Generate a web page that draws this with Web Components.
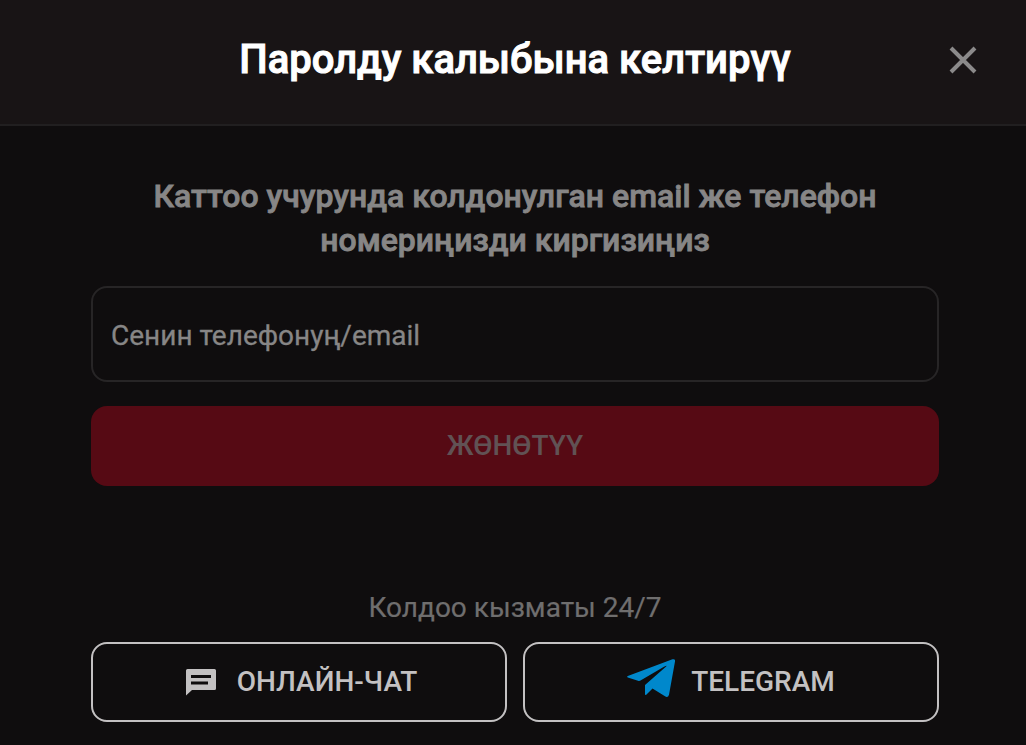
<!DOCTYPE html>
<html lang="ky"><head><meta charset="utf-8"><title>Паролду калыбына келтирүү</title>
<style>html,body{margin:0;height:100%;background:#0f0d0e}body{font-family:Roboto,sans-serif;overflow:hidden}</style></head>
<body>
<recovery-dialog></recovery-dialog>
<script>
const define=(name,html)=>customElements.define(name,class extends HTMLElement{constructor(){super();this.attachShadow({mode:'open'}).innerHTML=html;}});
define('dialog-header',`<style>:host{display:grid;grid-template-columns:1fr auto 1fr;align-items:center;box-sizing:border-box;height:126px;padding:0 48px 4px 52px;background:#181415;border-bottom:2px solid #211f20}
h1{grid-column:2;margin:0;color:#fff;font-size:40px;line-height:48px;font-weight:500;-webkit-text-stroke:1px #fff;white-space:nowrap}button{justify-self:end;display:block;border:0;padding:0;background:none;width:30px;height:30px}svg{display:block}</style>
<h1><slot></slot></h1><button aria-label="Жабуу"><svg width="30" height="30" viewBox="0 0 30 30"><path d="M3 3L27 27M27 3L3 27" stroke="#8b8a8a" stroke-width="4"/></svg></button>`);
define('login-field',`<style>:host{display:flex;align-items:center;box-sizing:border-box;height:96px;border:2px solid #272526;border-radius:16px;padding:2px 18px 0;color:#878686;font-size:28px;white-space:nowrap;-webkit-text-stroke:.3px #878686}</style><span><slot></slot></span>`);
define('submit-button',`<style>:host{display:block}button{display:block;width:100%;height:80px;border:0;border-radius:16px;background:#560a14;color:#615254;font:500 28px/80px Roboto,sans-serif;padding:0}</style><button disabled><slot></slot></button>`);
define('support-link',`<style>:host{display:flex;flex:1;align-items:center;justify-content:center;box-sizing:border-box;height:80px;border:2px solid #c3c1c2;border-radius:16px;color:#c3c1c2;font-size:28px;font-weight:500;line-height:34px;white-space:nowrap}::slotted(svg){display:block;flex:none}</style><slot name="icon"></slot><span><slot></slot></span>`);
define('recovery-dialog',`<style>:host{display:block}main{padding:48px 87px 0 91px}h2{margin:0;color:#878686;font-size:32px;line-height:44px;font-weight:500;-webkit-text-stroke:.8px #878686;text-align:center;white-space:nowrap}login-field{margin-top:24px}submit-button{margin-top:24px}p{margin:100px 0 0;text-align:center;font-size:28px;line-height:44px;color:#6f6e6e;-webkit-text-stroke:.2px #6f6e6e}nav{display:flex;gap:16px;margin-top:12px}</style>
<dialog-header>Паролду калыбына келтирүү</dialog-header>
<main><h2>Каттоо учурунда колдонулган email же телефон<br>номериңизди киргизиңиз</h2>
<login-field>Сенин телефонуң/email</login-field><submit-button>ЖӨНӨТҮҮ</submit-button>
<p>Колдоо кызматы 24/7</p><nav>
<support-link><svg slot="icon" width="30" height="28" viewBox="0 0 30 28" style="margin:0 21px 1px 5px"><path fill="#c3c1c2" fill-rule="evenodd" d="M1.5 1H28.5Q30 1 30 2.5V20.5Q30 22 28.5 22H6L0 27.5V2.5Q0 1 1.5 1ZM5 7V10H25V7ZM5 13.5V16.5H22V13.5Z"/></svg>ОНЛАЙН-ЧАТ</support-link>
<support-link><svg slot="icon" width="48" height="38" viewBox="0 0 48 38" style="margin:0 16px 8px 0"><path fill="#0088cc" d="M45.5.3Q48.4-.5 48 2.5L42 35.7Q41 39 38 37.3L25.5 29.5L19.5 35.5Q18 37 18 34.5V26L38 8.5Q41.5 5.5 37 7.8L13.5 21.5Q12.5 22.2 11 21.7L.8 18.4Q-.7 17.8.8 17Z"/></svg>TELEGRAM</support-link>
</nav></main>`);
</script></body></html>
